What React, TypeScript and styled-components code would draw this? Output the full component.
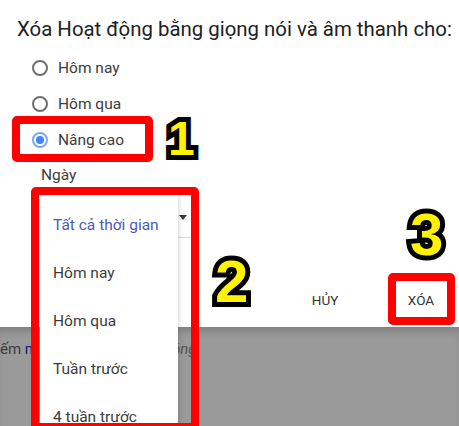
import styled, { createGlobalStyle } from 'styled-components';

const GlobalStyle = createGlobalStyle`
  html, body {
    margin: 0;
    padding: 0;
    background: #fff;
  }
  body {
    font-family: Roboto, "Noto Sans", Arial, sans-serif;
    overflow: hidden;
  }
`;

const Page = styled.div`
  position: relative;
  width: 459px;
  height: 426px;
  display: flex;
  flex-direction: column;
  overflow: hidden;
`;

const Dialog = styled.div`
  position: relative;
  z-index: 1;
  height: 327px;
  flex: none;
  background: #fff;
  padding: 17px 6px 9px 17px;
  box-sizing: border-box;
  display: flex;
  flex-direction: column;
`;

const Title = styled.h2`
  margin: 0;
  font-size: 20.4px;
  line-height: 24px;
  font-weight: 400;
  color: #212121;
  white-space: nowrap;
`;

const RadioList = styled.div`
  display: flex;
  flex-direction: column;
  margin-top: 9px;
  padding-left: 15px;
`;

const RadioRow = styled.label`
  display: flex;
  align-items: center;
  gap: 10px;
  height: 36px;
  font-size: 15.5px;
  color: #3c3c3c;
`;

const RadioDot = styled.span<{ $checked?: boolean }>`
  width: 16px;
  height: 16px;
  box-sizing: border-box;
  border-radius: 50%;
  border: 2px solid ${(p) => (p.$checked ? '#7aa7f5' : '#6f6f6f')};
  display: flex;
  align-items: center;
  justify-content: center;
  &::after {
    content: '';
    width: 8px;
    height: 8px;
    border-radius: 50%;
    background: ${(p) => (p.$checked ? '#4285f4' : 'transparent')};
  }
`;

const FieldLabel = styled.div`
  margin-top: 7px;
  padding-left: 24px;
  font-size: 15.5px;
  line-height: 20px;
  color: #3c3c3c;
`;

const Select = styled.div`
  position: relative;
  margin: 13px 0 0 23px;
  width: 151px;
  height: 40px;
  box-sizing: border-box;
  border-bottom: 1px solid #dcdcdc;
  display: flex;
  align-items: center;
  justify-content: flex-end;
  padding-right: 4px;
`;

const Caret = styled.span`
  width: 0;
  height: 0;
  border-left: 4px solid transparent;
  border-right: 4px solid transparent;
  border-top: 5px solid #3a3a3a;
`;

const Menu = styled.ul`
  position: absolute;
  z-index: 5;
  left: 0;
  top: -5px;
  width: 138px;
  margin: 0;
  padding: 8px 0;
  list-style: none;
  background: #fff;
  box-shadow: 0 2px 6px rgba(0, 0, 0, 0.22);
`;

const MenuItem = styled.li<{ $active?: boolean }>`
  height: 48px;
  display: flex;
  align-items: center;
  padding-left: 13px;
  font-size: 15.5px;
  white-space: nowrap;
  color: ${(p) => (p.$active ? '#4a5ab8' : '#3c3c3c')};
`;

const Actions = styled.div`
  margin-top: auto;
  display: flex;
  justify-content: flex-end;
  gap: 32px;
`;

const TextButton = styled.button`
  min-width: 64px;
  height: 36px;
  padding: 0 8px;
  border: none;
  background: transparent;
  font-family: Roboto, Arial, sans-serif;
  font-size: 13.5px;
  font-weight: 400;
  color: #333;
  text-transform: uppercase;
`;

const Backdrop = styled.div`
  flex: 1;
  background: #9a9a9a;
  box-shadow: inset 0 8px 8px -4px rgba(0, 0, 0, 0.18);
  padding-top: 11px;
  font-size: 15px;
  line-height: 22px;
  white-space: nowrap;
`;

const Dim = styled.span`
  color: #3a3a3a;
`;

const Link = styled.span`
  color: #1c1c6e;
`;

const Ghost = styled.span`
  margin-left: 134px;
  color: #555;
  font-style: italic;
`;

const Mark = styled.div<{ $x: number; $y: number; $w: number; $h: number }>`
  position: absolute;
  z-index: 20;
  left: ${(p) => p.$x}px;
  top: ${(p) => p.$y}px;
  width: ${(p) => p.$w}px;
  height: ${(p) => p.$h}px;
  box-sizing: border-box;
  border: 8px solid #ff0000;
  border-radius: 5px;
`;

const Step = styled.div<{ $x: number; $y: number; $size: number }>`
  position: absolute;
  z-index: 20;
  left: ${(p) => p.$x}px;
  top: ${(p) => p.$y}px;
  font-family: "Liberation Sans", Arial, sans-serif;
  font-weight: 700;
  font-size: ${(p) => p.$size}px;
  line-height: 1;
  color: #fff200;
  -webkit-text-stroke: 10px #000;
  paint-order: stroke fill;
  text-shadow: 2px 3px 3px rgba(0, 0, 0, 0.45);
`;

const ranges = ['Tất cả thời gian', 'Hôm nay', 'Hôm qua', 'Tuần trước', '4 tuần trước'];

export default function App() {
  return (
    <Page>
      <GlobalStyle />
      <Dialog>
        <Title>Xóa Hoạt động bằng giọng nói và âm thanh cho:</Title>
        <RadioList>
          <RadioRow>
            <RadioDot />
            Hôm nay
          </RadioRow>
          <RadioRow>
            <RadioDot />
            Hôm qua
          </RadioRow>
          <RadioRow>
            <RadioDot $checked />
            Nâng cao
          </RadioRow>
        </RadioList>
        <FieldLabel>Ngày</FieldLabel>
        <Select>
          <Caret />
          <Menu>
            {ranges.map((r, i) => (
              <MenuItem key={r} $active={i === 0}>
                {r}
              </MenuItem>
            ))}
          </Menu>
        </Select>
        <Actions>
          <TextButton>Hủy</TextButton>
          <TextButton>Xóa</TextButton>
        </Actions>
      </Dialog>
      <Backdrop>
        <Dim>ếm </Dim>
        <Link>m</Link>
        <Ghost>óng</Ghost>
      </Backdrop>

      <Mark $x={12} $y={116} $w={141} $h={46} />
      <Mark $x={31} $y={187} $w={168} $h={244} />
      <Mark $x={388} $y={273} $w={67} $h={52} />
      <Step $x={168} $y={115} $size={48}>1</Step>
      <Step $x={215} $y={252} $size={60}>2</Step>
      <Step $x={410} $y={205} $size={60}>3</Step>
    </Page>
  );
}
